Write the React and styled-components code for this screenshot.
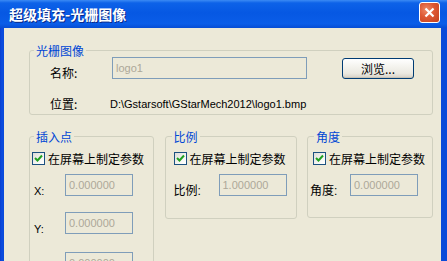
import React from 'react'
import styled, {createGlobalStyle} from 'styled-components'

const GlobalStyle = createGlobalStyle`
  html, body {
    margin: 0;
    padding: 0;
    overflow: hidden;
    background: #0831d9;
  }
`

const Window = styled.div`
  display: flex;
  flex-direction: column;
  width: 447px;
  height: 261px;
  background: linear-gradient(to right, #0a3fcf 0, #0b4de0 2px, #0a4ad9 4px);
  font-family: 'Liberation Sans', 'Noto Sans CJK SC', sans-serif;
  overflow: hidden;
`

const TitleBar = styled.div`
  display: flex;
  align-items: center;
  flex-shrink: 0;
  height: 28px;
  padding: 0 7px 0 9px;
  background: linear-gradient(
    to bottom,
    #3b8af4 0,
    #0d62e8 3px,
    #0658e3 45%,
    #0a5de8 85%,
    #064dd4 100%
  );
`

const Title = styled.div`
  flex: 1;
  color: #fff;
  font-family: 'Noto Sans CJK SC', sans-serif;
  font-size: 14px;
  font-weight: bold;
  line-height: 16px;
  text-shadow: 1px 1px 0 #0a2a8a;
`

const CloseButton = styled.div`
  display: flex;
  align-items: center;
  justify-content: center;
  box-sizing: border-box;
  width: 21px;
  height: 21px;
  margin-top: -3px;
  border: 1px solid #fff;
  border-radius: 3px;
  background: radial-gradient(circle at 35% 35%, #f08a67 0, #dd5733 45%, #c2401d 100%);
`

const Body = styled.div`
  display: flex;
  flex-direction: column;
  flex: 1;
  margin: 0 6px 0 4px;
  padding: 16px 8px 0 25px;
  background: #ece9d8;
  overflow: hidden;
`

const Group = styled.fieldset`
  box-sizing: border-box;
  width: ${p => p.$width}px;
  margin: 0;
  padding: 0;
  border: 1px solid #d0d0bf;
  border-radius: 3px;
  min-width: 0;
`

const Legend = styled.legend`
  margin-left: ${p => p.$offset}px;
  padding: 0 2px;
  color: #0046d5;
  font-family: 'Noto Sans CJK SC', sans-serif;
  font-size: 12px;
  line-height: 13px;
`

const ImageGrid = styled.div`
  display: grid;
  grid-template-columns: 62px 195px 107px;
  row-gap: 17px;
  padding: 0 0 3px 20px;
`

const CnLabel = styled.span`
  font-family: 'Noto Sans CJK SC', sans-serif;
  font-size: 12px;
  line-height: 14px;
  color: #000;
  padding-top: ${p => p.$top || 0}px;
`

const TextBox = styled.div`
  box-sizing: border-box;
  width: ${p => p.$width}px;
  height: 22px;
  padding: 3px 0 0 3px;
  border: 1px solid #7f9db9;
  background: #ece9d8;
  color: #aca899;
  font-size: 11px;
  line-height: 14px;
`

const Button = styled.div`
  justify-self: end;
  box-sizing: border-box;
  width: 72px;
  height: 21px;
  margin-top: 1px;
  border: 1px solid #003c74;
  border-radius: 3px;
  background: linear-gradient(to bottom, #ffffff 0, #f4f3ee 40%, #ebe9e1 75%, #d6d0c5 100%);
  box-shadow: inset 0 -1px 0 #c9c4b6;
  text-align: center;
  font-family: 'Noto Sans CJK SC', sans-serif;
  font-size: 12px;
  line-height: 19px;
  color: #000;
`

const PathText = styled.span`
  margin-left: -2px;
  font-size: 11px;
  line-height: 14px;
  color: #000;
  white-space: nowrap;
`

const GroupRow = styled.div`
  display: flex;
  justify-content: space-between;
  align-items: flex-start;
  margin-top: 15px;
`

const GroupInner = styled.div`
  display: flex;
  flex-direction: column;
  padding: 9px 0 ${p => p.$bottom}px ${p => p.$pad}px;
`

const CheckRow = styled.label`
  display: flex;
  align-items: center;
  gap: 3px;
  height: 13px;
  font-family: 'Noto Sans CJK SC', sans-serif;
  font-size: 12px;
  color: #000;
  white-space: nowrap;
`

const CheckBox = styled.span`
  display: flex;
  align-items: center;
  justify-content: center;
  box-sizing: border-box;
  width: 13px;
  height: 13px;
  flex-shrink: 0;
  border: 1px solid #1c5180;
  background: linear-gradient(135deg, #dcdcd7 0, #f6f6f3 60%, #ffffff 100%);
`

const Field = styled.div`
  display: flex;
  align-items: flex-start;
  margin: ${p => p.$top}px 0 0 ${p => p.$indent}px;
`

const FieldLabel = styled.span`
  width: ${p => p.$width}px;
  flex-shrink: 0;
  padding-top: 10px;
  font-family: 'Liberation Sans', 'Noto Sans CJK SC', sans-serif;
  font-size: ${p => (p.$cn ? 12 : 11)}px;
  line-height: 14px;
  color: #000;
`

function Check({children}) {
  return (
    <CheckRow>
      <CheckBox>
        <svg width="9" height="9" viewBox="0 0 9 9">
          <polyline
            points="1,4 3.5,6.5 8,1.5"
            fill="none"
            stroke="#21a121"
            strokeWidth="2"
          />
        </svg>
      </CheckBox>
      {children}
    </CheckRow>
  )
}

function ParamGroup({title, width, offset, pad, indent, labelWidth, fields, bottom}) {
  return (
    <Group $width={width}>
      <Legend $offset={offset}>{title}</Legend>
      <GroupInner $pad={pad} $bottom={bottom}>
        <Check>在屏幕上制定参数</Check>
        {fields.map(f => (
          <Field key={f.label} $indent={indent} $top={f.top}>
            <FieldLabel $width={labelWidth} $cn={f.cn}>
              {f.label}
            </FieldLabel>
            <TextBox $width={68}>{f.value}</TextBox>
          </Field>
        ))}
      </GroupInner>
    </Group>
  )
}

export default function App() {
  return (
    <>
      <GlobalStyle />
      <Window>
        <TitleBar>
          <Title>超级填充-光栅图像</Title>
          <CloseButton>
            <svg width="11" height="11" viewBox="0 0 11 11">
              <path d="M1.5 1.5 L9.5 9.5 M9.5 1.5 L1.5 9.5" stroke="#fff" strokeWidth="2.2" />
            </svg>
          </CloseButton>
        </TitleBar>

        <Body>
          <Group $width={404}>
            <Legend $offset={4}>光栅图像</Legend>
            <ImageGrid>
              <CnLabel $top={9}>名称:</CnLabel>
              <TextBox $width={195}>logo1</TextBox>
              <Button>浏览...</Button>
              <CnLabel>位置:</CnLabel>
              <PathText>D:\Gstarsoft\GStarMech2012\logo1.bmp</PathText>
            </ImageGrid>
          </Group>

          <GroupRow>
            <ParamGroup
              title="插入点"
              width={125}
              offset={4}
              pad={2}
              indent={2}
              labelWidth={31}
              bottom={20}
              fields={[
                {label: 'X:', value: '0.000000', top: 9},
                {label: 'Y:', value: '0.000000', top: 14},
                {label: 'Z:', value: '0.000000', top: 16},
              ]}
            />
            <ParamGroup
              title="比例"
              width={132}
              offset={6}
              pad={8}
              indent={0}
              labelWidth={45}
              bottom={20}
              fields={[{label: '比例:', value: '1.000000', top: 9, cn: true}]}
            />
            <ParamGroup
              title="角度"
              width={126}
              offset={6}
              pad={5}
              indent={-3}
              labelWidth={40}
              bottom={19}
              fields={[{label: '角度:', value: '0.000000', top: 9, cn: true}]}
            />
          </GroupRow>
        </Body>
      </Window>
    </>
  )
}
